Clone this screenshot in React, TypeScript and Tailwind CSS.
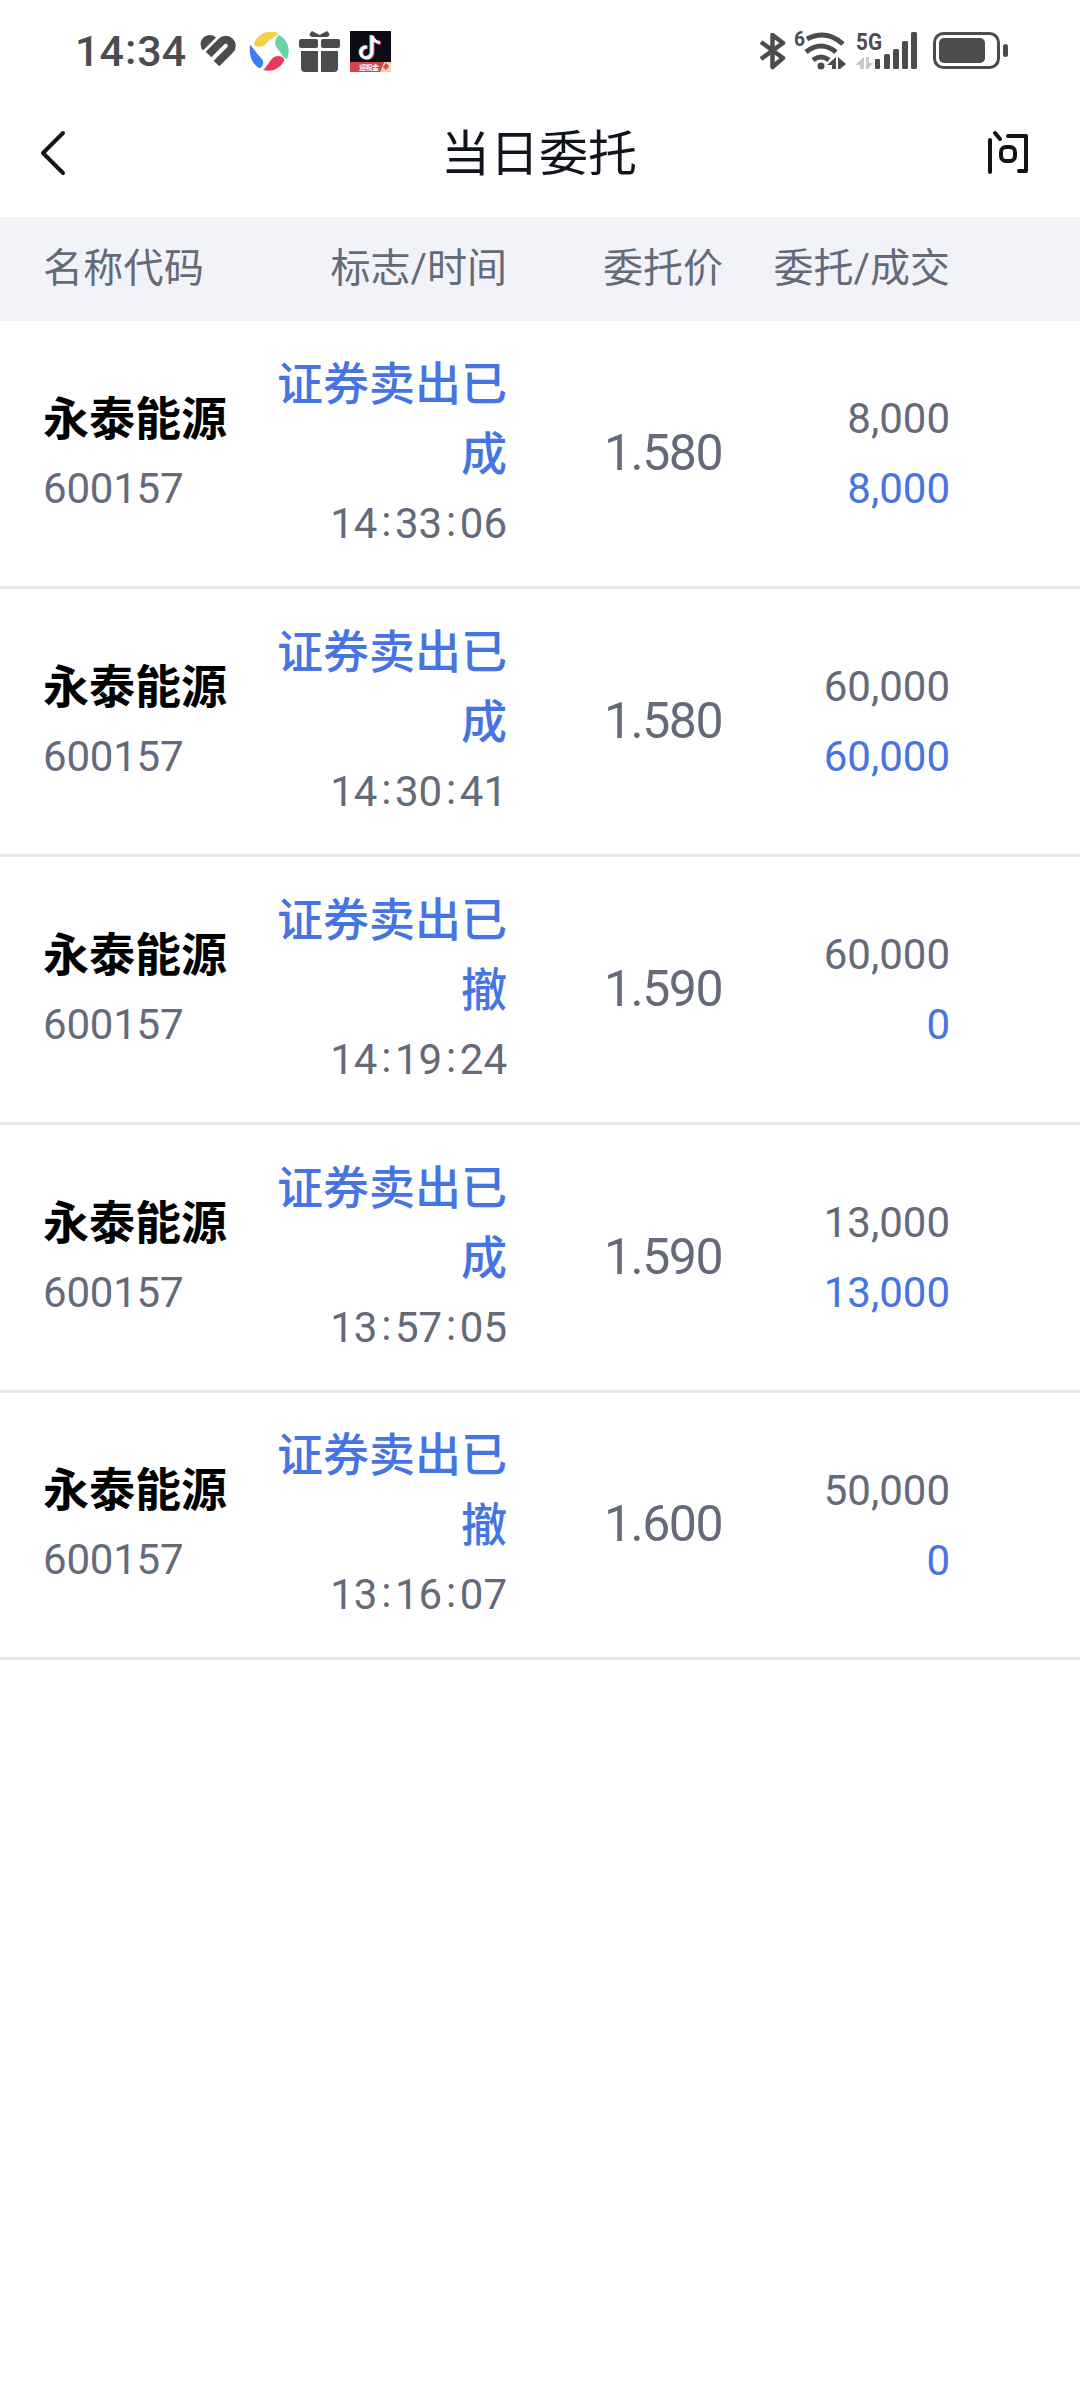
import { clsx } from "clsx";

type Order = {
  name: string;
  code: string;
  status: string;
  time: string;
  price: string;
  amount: string;
  filled: string;
};

const ORDERS: Order[] = [
  { name: "永泰能源", code: "600157", status: "证券卖出已成", time: "14:33:06", price: "1.580", amount: "8,000", filled: "8,000" },
  { name: "永泰能源", code: "600157", status: "证券卖出已成", time: "14:30:41", price: "1.580", amount: "60,000", filled: "60,000" },
  { name: "永泰能源", code: "600157", status: "证券卖出已撤", time: "14:19:24", price: "1.590", amount: "60,000", filled: "0" },
  { name: "永泰能源", code: "600157", status: "证券卖出已成", time: "13:57:05", price: "1.590", amount: "13,000", filled: "13,000" },
  { name: "永泰能源", code: "600157", status: "证券卖出已撤", time: "13:16:07", price: "1.600", amount: "50,000", filled: "0" },
];

const NotificationIcons = () => (
  <svg width="196" height="46" viewBox="0 0 196 46" className="ml-[13px]">
    {/* striped heart */}
    <path d="M4 22.500 L17 9.500 A9.200 9.200 0 0 0 4 22.500Z" fill="#4c4c4c" />
    <path d="M9.500 26.500 L22.500 13.500 A6 6 0 0 1 31 22 L17.500 35.500" fill="none" stroke="#4c4c4c" strokeWidth="8" />
    {/* colour wheel */}
    <path d="M55 16 C59 4 71 2 79 5 C80 8 71 10 66 17 C62 20 55 19 55 16Z" fill="#f6cf4b" />
    <path d="M80 7 C89 12 92 22 88 31 C84 30 83 26 78 20 C74 15 77 9 80 7Z" fill="#68d2a8" />
    <path d="M51 17 C55 20 56 24 62 30 C66 34 64 40 60 40 C52 35 50 26 51 17Z" fill="#3c7df5" />
    <path d="M64 42 C68 39 70 33 75 29 C81 26 87 30 85 33 C80 42 72 44 64 42Z" fill="#e93a5e" />
    {/* gift */}
    <g fill="#4c4c4c">
      <path d="M120.500 7 L113 3 Q108 7 113 9 H128 Q133 7 128 3Z" />
      <rect x="100" y="11" width="19" height="9" rx="2" />
      <rect x="122" y="11" width="19" height="9" rx="2" />
      <path d="M102 23 H119 V44 H106 Q102 44 102 40Z" />
      <path d="M122 23 H139 V40 Q139 44 135 44 H122Z" />
    </g>
    {/* short video app */}
    <rect x="151" y="3" width="41" height="41" fill="#0d0b17" />
    <g fill="none" strokeWidth="3">
      <path d="M172 7 V24 A5.500 5.500 0 1 1 167 18.500" stroke="#5ee6e6" />
      <path d="M174 8 V25 A5.500 5.500 0 1 1 169 19.500 M174 9 Q176 15 182 15.500" stroke="#e8405f" />
      <path d="M173 7.500 V24.500 A5.500 5.500 0 1 1 168 19 M173 8 Q175 14 181 14.500" stroke="#fff" />
    </g>
    <path d="M151 34 H185 L181 44 H151Z" fill="#d2434a" />
    <path d="M185 34 H192 V44 H181Z" fill="#f4cdb4" />
    <text x="160" y="42" fontSize="7" fontWeight="700" fill="#fff" textLength="20">迎祝金</text>
    <path d="M187 35 L190 38 L187 42 L184 39Z" fill="#c4524a" />
  </svg>
);

const SystemIcons = () => (
  <svg width="260" height="50" viewBox="0 0 260 50">
    <g transform="translate(0 1)">
      {/* bluetooth */}
      <path d="M2 13 L24 29 L13.500 38 V6 L24 14 L2 30" fill="none" stroke="#4c4c4c" strokeWidth="4.500" strokeLinejoin="round" />
      {/* wifi */}
      <text x="35" y="17" fontSize="21" fontWeight="700" fill="#4c4c4c" textLength="11" lengthAdjust="spacingAndGlyphs">6</text>
      <g fill="none" stroke="#4c4c4c" strokeWidth="5">
        <path d="M48 10 Q67 0 84 15" />
        <path d="M47 23 Q62 11 77 23" />
        <path d="M54 31 Q62 25 70 31" />
      </g>
      <circle cx="62" cy="37" r="3.500" fill="#4c4c4c" />
      <path d="M68 36 L77 28 V40 H73 V36Z M79 28 L87 35 L81 40 H79Z" fill="#4c4c4c" />
      {/* mobile signal */}
      <text x="97" y="21" fontSize="24" fontWeight="700" fill="#4c4c4c" textLength="26" lengthAdjust="spacingAndGlyphs">5G</text>
      <path d="M96 36 L105 28 V40 H101 V36Z M107 28 H110 V34 H114 L109 40 H107Z" fill="#c8c8c8" />
      <g fill="#4c4c4c">
        <rect x="116" y="30" width="5" height="10" rx="1" />
        <rect x="125" y="25" width="6" height="15" rx="1.500" />
        <rect x="134" y="20" width="6" height="20" rx="1.500" />
        <rect x="143" y="12" width="6" height="28" rx="1.500" />
        <rect x="152" y="3" width="6" height="37" rx="1.500" />
      </g>
      {/* battery */}
      <rect x="175.500" y="4.500" width="64" height="34" rx="9" fill="none" stroke="#4c4c4c" strokeWidth="3" />
      <rect x="180" y="9" width="46" height="25" rx="5" fill="#4c4c4c" />
      <rect x="244" y="15" width="5" height="13" rx="2.500" fill="#4c4c4c" />
    </g>
  </svg>
);

const StatusBar = () => (
  <div className="flex h-[102px] items-start justify-between pt-[28px] pr-[61px] pl-[75px] text-[#4c4c4c]">
    <div className="flex items-start">
      <span className="w-[111px] text-[43px] leading-[46px] font-medium whitespace-nowrap">
        14<span className="relative -top-[2px] mx-px">:</span>34
      </span>
      <NotificationIcons />
    </div>
    <SystemIcons />
  </div>
);

const TitleBar = () => (
  <div className="flex h-[115px] items-center pr-[50px] pb-[13px] pl-[40px]">
    <button aria-label="返回" className="w-[42px]">
      <svg width="26" height="48" viewBox="0 0 26 48" fill="none" stroke="#14161c" strokeWidth="4" strokeLinecap="round" strokeLinejoin="round">
        <path d="M23 4 L3 24 L23 44" />
      </svg>
    </button>
    <h1 className="flex-1 pt-[4px] pl-[8px] text-center text-[49px] leading-[60px] text-[#10141c]">当日委托</h1>
    <button aria-label="问">
      <svg width="42" height="46" viewBox="0 0 42 46" fill="none" stroke="#101318" strokeWidth="4" strokeLinecap="round" strokeLinejoin="round">
        <path d="M2 10 V42 M7 3 L12 9 M20 6 H38 V41 H31" />
        <rect x="13" y="17" width="14" height="14" rx="5" />
      </svg>
    </button>
  </div>
);

const TableHeader = () => (
  <div className="flex h-[104px] items-center bg-[#f2f3f8] pb-[1px] pl-[43px] text-[40px] leading-[60px] text-[#646a7a]">
    <span className="w-[220px] tracking-[0.3px]">名称代码</span>
    <span className="w-[244px] text-right">标志/时间</span>
    <span className="w-[216px] text-right">委托价</span>
    <span className="w-[227px] text-right">委托/成交</span>
  </div>
);

// colons sit wider and a little higher than the font's own
const Time = ({ value }: { value: string }) => (
  <div className="font-[450]">
    {value.split(":").map((part, i) => (
      <span key={i}>
        {i > 0 && <span className="relative -top-[2px] mx-[3.7px]">:</span>}
        {part}
      </span>
    ))}
  </div>
);

const OrderRow = ({ order, last }: { order: Order; last: boolean }) => (
  <div
    className={clsx(
      "flex items-center border-b-[3px] border-[#e5e7eb] pl-[43px] text-[42px] leading-[70px] text-[#646a7a]",
      last ? "h-[267px]" : "h-[268px]",
    )}
  >
    <div className="w-[220px]">
      <div className="text-[46px] font-bold text-black">{order.name}</div>
      <div className="font-[450] tracking-[-0.2px]">{order.code}</div>
    </div>
    <div className="w-[244px] text-right">
      <div className="text-[46px] font-medium break-all text-[#4674e2]">{order.status}</div>
      <Time value={order.time} />
    </div>
    <div className="w-[215px] pb-[2px] text-right text-[50px] tracking-[-1.5px]">{order.price}</div>
    <div className="w-[228px] pt-px text-right">
      <div>{order.amount}</div>
      <div className="text-[#4674e2]">{order.filled}</div>
    </div>
  </div>
);

const App = () => (
  <div className="h-[2400px] w-[1080px] overflow-hidden bg-white font-[Roboto,'Noto_Sans_CJK_SC',sans-serif]">
    <StatusBar />
    <TitleBar />
    <TableHeader />
    {ORDERS.map((order, i) => (
      <OrderRow key={order.time} order={order} last={i === ORDERS.length - 1} />
    ))}
  </div>
);

export default App;
